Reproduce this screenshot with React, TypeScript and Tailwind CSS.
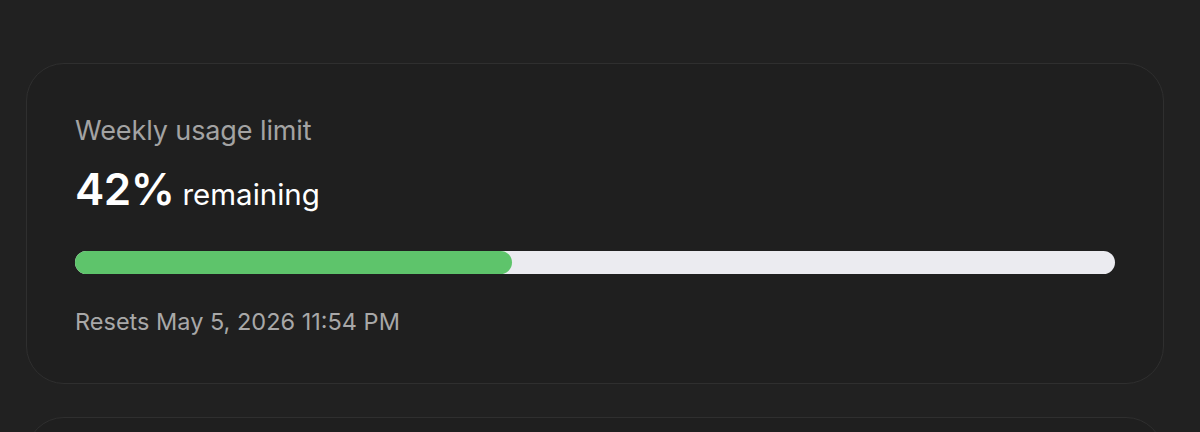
export default function App() {
  const pct = 42;
  return (
    <div className="h-[432px] w-[1200px] overflow-hidden bg-[#212121] pt-[63px] font-['Inter',sans-serif]">
      <div className="ml-[26px] w-[1138px] rounded-[38px] border border-[#2f2f2f] bg-[#1f1f1f] px-12 pb-[47px] pt-[51px]">
        <p className="text-[27px] leading-[32px] tracking-[-0.1px] text-[#a3a3a3]">Weekly usage limit</p>
        <p className="mt-[16px] flex items-baseline gap-[8px] text-white">
          <span className="text-[44px] font-semibold leading-[52px] tracking-[-0.5px]">{pct}%</span>
          <span className="text-[29.5px] leading-[34px]">remaining</span>
        </p>
        <div className="mt-[36px] h-[23px] w-full rounded-full bg-[#ebebf0]">
          <div className="h-full rounded-full bg-[#5ec46b]" style={{ width: `${pct}%` }} />
        </div>
        <p className="mt-[34px] text-[23.5px] leading-[28px] text-[#a8a8a8]">Resets May 5, 2026 11:54 PM</p>
      </div>
      <div className="ml-[26px] mt-[33px] h-[120px] w-[1138px] rounded-[38px] border border-[#2f2f2f] bg-[#1f1f1f]" />
    </div>
  );
}
